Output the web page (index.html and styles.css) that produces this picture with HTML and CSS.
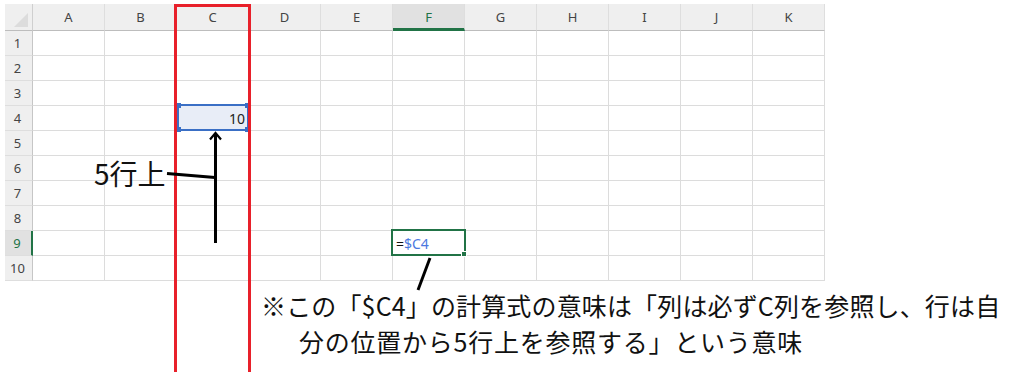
FILE: index.html
```html
<!DOCTYPE html>
<html lang="ja">
<head>
<meta charset="utf-8">
<title>Sheet</title>
<link rel="stylesheet" href="styles.css">
</head>
<body>
<div class="canvas">
  <div class="grid">
    <div class="corner"><span class="tri"></span></div>
    <div class="colh">A</div><div class="colh">B</div><div class="colh">C</div><div class="colh">D</div><div class="colh">E</div><div class="colh active">F</div><div class="colh">G</div><div class="colh">H</div><div class="colh">I</div><div class="colh">J</div><div class="colh">K</div>

    <div class="rowh">1</div><div class="cell"></div><div class="cell"></div><div class="cell"></div><div class="cell"></div><div class="cell"></div><div class="cell"></div><div class="cell"></div><div class="cell"></div><div class="cell"></div><div class="cell"></div><div class="cell"></div>
    <div class="rowh">2</div><div class="cell"></div><div class="cell"></div><div class="cell"></div><div class="cell"></div><div class="cell"></div><div class="cell"></div><div class="cell"></div><div class="cell"></div><div class="cell"></div><div class="cell"></div><div class="cell"></div>
    <div class="rowh">3</div><div class="cell"></div><div class="cell"></div><div class="cell"></div><div class="cell"></div><div class="cell"></div><div class="cell"></div><div class="cell"></div><div class="cell"></div><div class="cell"></div><div class="cell"></div><div class="cell"></div>
    <div class="rowh">4</div><div class="cell"></div><div class="cell"></div><div class="cell num ref">10</div><div class="cell"></div><div class="cell"></div><div class="cell"></div><div class="cell"></div><div class="cell"></div><div class="cell"></div><div class="cell"></div><div class="cell"></div>
    <div class="rowh">5</div><div class="cell"></div><div class="cell"></div><div class="cell"></div><div class="cell"></div><div class="cell"></div><div class="cell"></div><div class="cell"></div><div class="cell"></div><div class="cell"></div><div class="cell"></div><div class="cell"></div>
    <div class="rowh">6</div><div class="cell"></div><div class="cell"></div><div class="cell"></div><div class="cell"></div><div class="cell"></div><div class="cell"></div><div class="cell"></div><div class="cell"></div><div class="cell"></div><div class="cell"></div><div class="cell"></div>
    <div class="rowh">7</div><div class="cell"></div><div class="cell"></div><div class="cell"></div><div class="cell"></div><div class="cell"></div><div class="cell"></div><div class="cell"></div><div class="cell"></div><div class="cell"></div><div class="cell"></div><div class="cell"></div>
    <div class="rowh">8</div><div class="cell"></div><div class="cell"></div><div class="cell"></div><div class="cell"></div><div class="cell"></div><div class="cell"></div><div class="cell"></div><div class="cell"></div><div class="cell"></div><div class="cell"></div><div class="cell"></div>
    <div class="rowh active">9</div><div class="cell"></div><div class="cell"></div><div class="cell"></div><div class="cell"></div><div class="cell"></div><div class="cell formula"><span class="eq">=</span><span class="refc">$C4</span></div><div class="cell"></div><div class="cell"></div><div class="cell"></div><div class="cell"></div><div class="cell"></div>
    <div class="rowh">10</div><div class="cell"></div><div class="cell"></div><div class="cell"></div><div class="cell"></div><div class="cell"></div><div class="cell"></div><div class="cell"></div><div class="cell"></div><div class="cell"></div><div class="cell"></div><div class="cell"></div>
  </div>

  <div class="note">
    <div class="note-line first">※この「$C4」の計算式の意味は「列は必ずC列を参照し、行は自</div>
    <div class="note-line second">分の位置から5行上を参照する」という意味</div>
  </div>

  <div class="ref-box">
    <span class="h tl"></span><span class="h tr"></span><span class="h bl"></span><span class="h br"></span>
  </div>
  <div class="active-box"><span class="fill-handle"></span></div>
  <div class="red-frame"></div>
  <svg class="arrows" width="1011" height="372" viewBox="0 0 1011 372">
    <line x1="215.5" y1="134" x2="215.5" y2="243" stroke="#000" stroke-width="3"/>
    <polyline points="210,139.5 215.5,133 221,139.5" fill="none" stroke="#000" stroke-width="2.2"/>
    <line x1="167" y1="173.5" x2="215" y2="177.5" stroke="#000" stroke-width="3"/>
    <line x1="430" y1="258" x2="418" y2="290" stroke="#000" stroke-width="3"/>
  </svg>
  <div class="label">5行上</div>
</div>
</body>
</html>
```

FILE: styles.css
```css
html, body {
  margin: 0;
  padding: 0;
  background: #ffffff;
}

.canvas {
  position: relative;
  width: 1011px;
  height: 372px;
  overflow: hidden;
  font-family: "Noto Sans", "Open Sans", sans-serif;
}

.grid {
  display: grid;
  grid-template-columns: 28px repeat(11, 72px);
  grid-template-rows: 27px repeat(10, 25px);
  margin: 4px 0 0 5px;
  width: max-content;
}

.grid > div {
  box-sizing: border-box;
}

.corner {
  position: relative;
  background: #efefef;
  border-right: 1px solid #cfcfcf;
  border-bottom: 1px solid #bdbdbd;
}

.tri {
  position: absolute;
  right: 4px;
  bottom: 3px;
  width: 0;
  height: 0;
  border-left: 14px solid transparent;
  border-bottom: 14px solid #dcdcdc;
}

.colh {
  background: #efefef;
  border-right: 1px solid #dedede;
  border-bottom: 1px solid #bdbdbd;
  display: flex;
  align-items: center;
  justify-content: center;
  font-size: 13px;
  color: #444;
}

.colh.active {
  background: #e1e1e1;
  color: #217346;
  border-bottom: 3px solid #217346;
  padding-top: 2px;
}

.rowh {
  background: #efefef;
  border-right: 1px solid #c6c6c6;
  border-bottom: 1px solid #dedede;
  display: flex;
  align-items: center;
  justify-content: center;
  font-size: 13px;
  color: #444;
  padding-right: 2px;
}

.rowh.active {
  background: #e1e1e1;
  color: #217346;
  border-right: 2px solid #217346;
}

.cell {
  border-right: 1px solid #dcdcdc;
  border-bottom: 1px solid #dcdcdc;
  font-size: 14px;
  color: #222;
  display: flex;
  align-items: center;
  padding: 0 3px;
}

.cell.num {
  justify-content: flex-end;
}

.cell.ref {
  background: #e8edf7;
}

.cell.formula .eq {
  color: #111;
}

.cell.formula .refc {
  color: #4a78e0;
}

.ref-box {
  position: absolute;
  left: 177px;
  top: 104px;
  width: 72px;
  height: 27px;
  box-sizing: border-box;
  border: 2px solid #3a6fc5;
}

.ref-box .h {
  position: absolute;
  width: 5px;
  height: 5px;
  background: #3a6fc5;
}

.ref-box .tl { left: -3px; top: -3px; }
.ref-box .tr { right: -3px; top: -3px; }
.ref-box .bl { left: -3px; bottom: -3px; }
.ref-box .br { right: -3px; bottom: -3px; }

.active-box {
  position: absolute;
  left: 391px;
  top: 229px;
  width: 75px;
  height: 27px;
  box-sizing: border-box;
  border: 2px solid #217346;
}

.fill-handle {
  position: absolute;
  right: -3px;
  bottom: -3px;
  width: 4px;
  height: 4px;
  background: #217346;
  border: 1px solid #fff;
}

.red-frame {
  position: absolute;
  left: 174px;
  top: 4px;
  width: 77px;
  height: 400px;
  box-sizing: border-box;
  border: 3px solid #e8202a;
}

.arrows {
  position: absolute;
  left: 0;
  top: 0;
}

.label {
  position: absolute;
  left: 94px;
  top: 155px;
  font-family: "Noto Sans CJK JP", sans-serif;
  font-size: 28px;
  line-height: 36px;
  color: #111;
}

.note {
  font-family: "Noto Sans CJK JP", sans-serif;
  font-size: 25px;
  line-height: 36px;
  color: #111;
  margin-top: 6px;
  white-space: nowrap;
}

.note-line.first {
  margin-left: 261px;
  letter-spacing: 0.15px;
}

.note-line.second {
  margin-left: 299px;
  letter-spacing: 0.75px;
}
```
